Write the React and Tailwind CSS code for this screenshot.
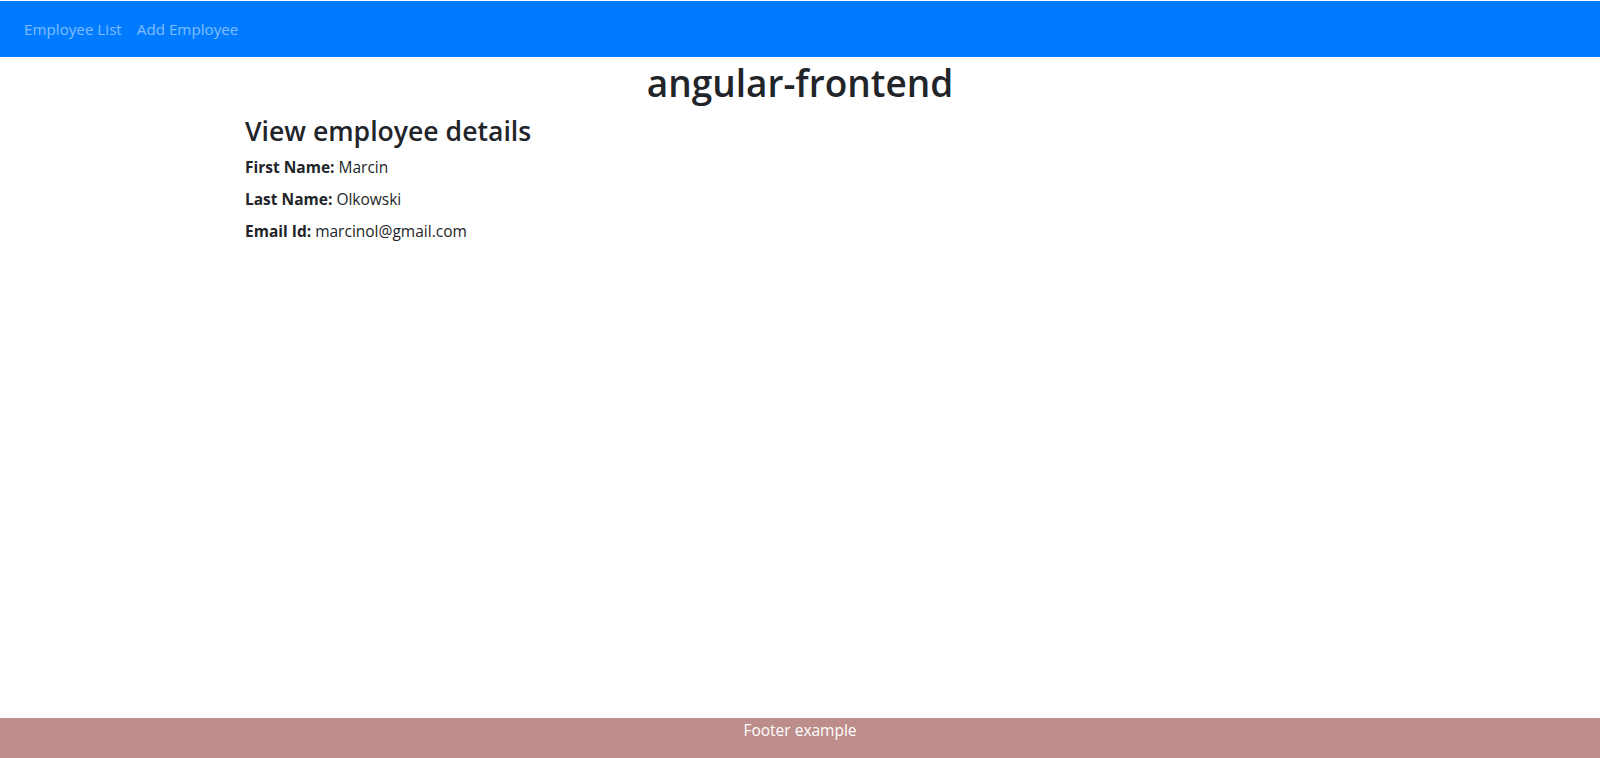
import React from 'react';

const employee = {
  firstName: 'Marcin',
  lastName: 'Olkowski',
  emailId: 'marcinol@gmail.com',
};

export default function App() {
  return (
    <div className="flex flex-col min-h-screen bg-white text-[#212529] text-base" style={{ fontFamily: '"Open Sans", "Noto Sans", sans-serif' }}>
      <nav className="mt-px h-14 bg-[#007bff] flex items-center px-6 gap-[15px] text-[15.2px] pt-px">
        <a href="#" className="text-white/50">Employee List</a>
        <a href="#" className="text-white/50">Add Employee</a>
      </nav>

      <main className="flex-1">
        <h1 className="text-center text-[37px] leading-[48px] font-semibold mt-0.5 mb-1.5">angular-frontend</h1>
        <div className="max-w-[1140px] mx-auto px-[15px]">
          <h2 className="text-[26.6px] leading-[36px] font-semibold mb-1.5">View employee details</h2>
          <div className="flex flex-col gap-2 text-[15.5px] leading-6">
            <div><span className="font-bold">First Name:</span> {employee.firstName}</div>
            <div><span className="font-bold">Last Name:</span> {employee.lastName}</div>
            <div><span className="font-bold">Email Id:</span> {employee.emailId}</div>
          </div>
        </div>
      </main>

      <footer className="h-10 bg-[#bc8d8b] text-white text-center text-[15.5px] leading-6">
        Footer example
      </footer>
    </div>
  );
}
